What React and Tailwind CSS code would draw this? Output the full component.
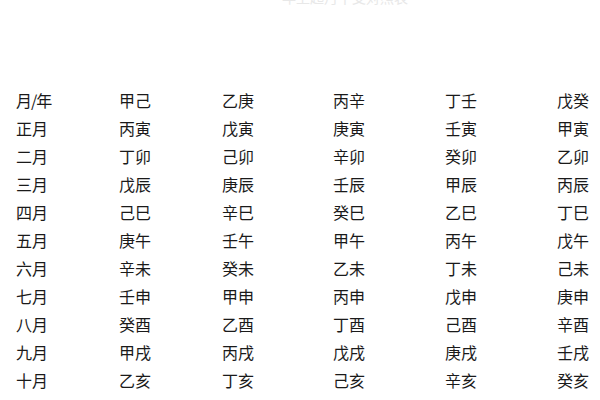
import React from "react";

const rows = [
  ["月/年", "甲己", "乙庚", "丙辛", "丁壬", "戊癸"],
  ["正月", "丙寅", "戊寅", "庚寅", "壬寅", "甲寅"],
  ["二月", "丁卯", "己卯", "辛卯", "癸卯", "乙卯"],
  ["三月", "戊辰", "庚辰", "壬辰", "甲辰", "丙辰"],
  ["四月", "己巳", "辛巳", "癸巳", "乙巳", "丁巳"],
  ["五月", "庚午", "壬午", "甲午", "丙午", "戊午"],
  ["六月", "辛未", "癸未", "乙未", "丁未", "己未"],
  ["七月", "壬申", "甲申", "丙申", "戊申", "庚申"],
  ["八月", "癸酉", "乙酉", "丁酉", "己酉", "辛酉"],
  ["九月", "甲戌", "丙戌", "戊戌", "庚戌", "壬戌"],
  ["十月", "乙亥", "丁亥", "己亥", "辛亥", "癸亥"],
  ["十一月", "丙子", "戊子", "庚子", "壬子", "甲子"],
];

export default function App() {
  return (
    <div
      className="w-[600px] h-[400px] overflow-hidden bg-white text-[#1a1a1a]"
      style={{ fontFamily: '"Noto Sans CJK SC", "Noto Sans", sans-serif' }}
    >
      <div className="h-[6px] overflow-hidden flex justify-center">
        <div className="-mt-[12px] text-[14px] leading-[18px] text-[#e8e8e8] pl-[90px]">
          年上起月干支对照表
        </div>
      </div>
      <div className="pt-[80px] pl-[16px]">
        {rows.map((r, i) => (
          <div
            key={i}
            className="grid grid-cols-[103px_103px_111px_112px_112px_auto] h-[28px] items-center text-[16px] leading-[28px]"
          >
            {r.map((c, j) => (
              <div key={j} className={j === 0 && i === 0 ? "tracking-[-1px]" : ""}>
                {c}
              </div>
            ))}
          </div>
        ))}
      </div>
    </div>
  );
}
